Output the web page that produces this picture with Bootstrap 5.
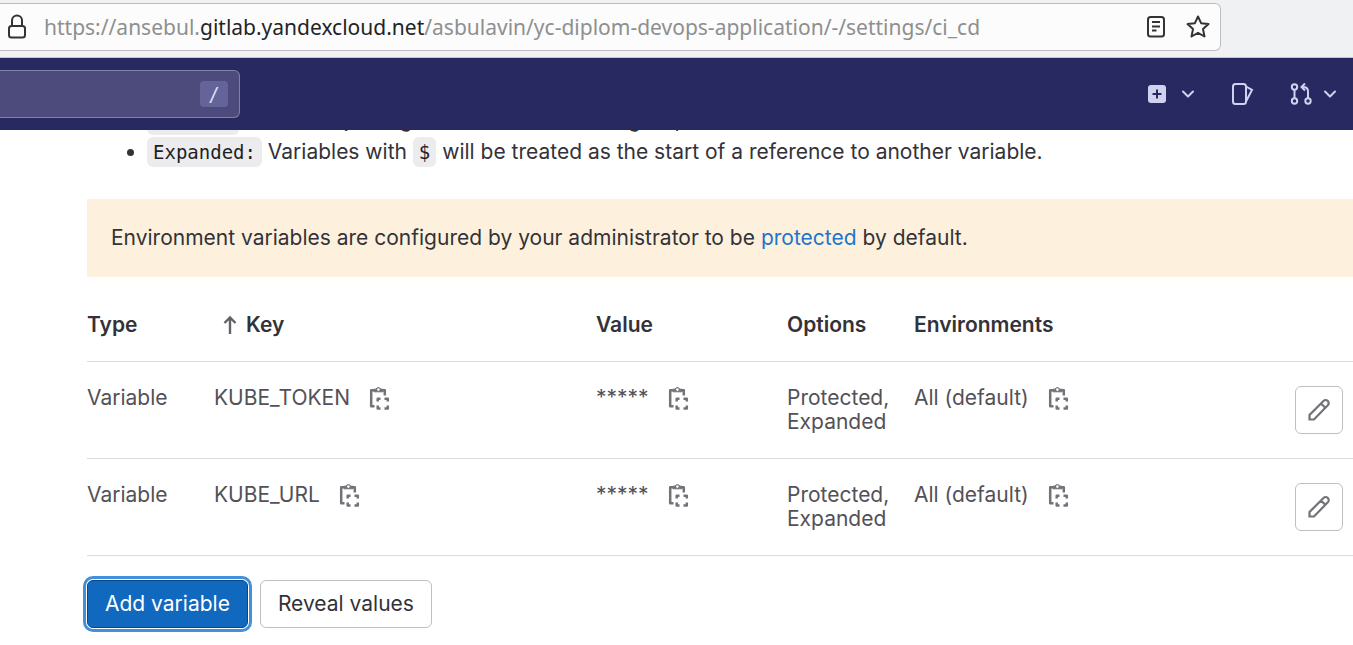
<!DOCTYPE html>
<html lang="en">
<head>
<meta charset="utf-8">
<meta name="viewport" content="width=device-width, initial-scale=1">
<title>CI/CD Settings</title>
<link href="https://cdn.jsdelivr.net/npm/bootstrap@5.3.0/dist/css/bootstrap.min.css" rel="stylesheet">
<style>
  body { font-family: Inter, "Liberation Sans", sans-serif; font-size: 21px; line-height: 32px; color: #333238; overflow-x: hidden; }
  svg { display: block; flex: none; fill: none; stroke: currentColor; stroke-width: 2; }
  .icon-btn { background: none; border: 0; padding: 0; color: inherit; }
  .browser-bar { background: #f0f1f3; border-bottom: 1px solid #c3c6c9; padding: 3px 132px 6px 0; }
  .address-box { height: 48px; background: #fcfcfc; border: 1px solid #bcbec0; border-left: 0; border-radius: 0 6px 6px 0; padding: 0 8px 0 5px; color: #333; }
  .address-text { font: 21px/32px "Noto Sans", sans-serif; color: #8e8f90; margin-left: 15px; }
  .address-text b { font-weight: 400; color: #222426; }
  .top-nav { background: #292961; height: 72px; color: #d1d1f0; z-index: 2; padding: 0 17px 0 0; }
  .nav-tools { gap: 36px; }
  .search-box { width: 240px; height: 48px; background: #4c4b7c; border: 1px solid #8080aa; border-left: 0; border-radius: 0 6px 6px 0; padding-right: 11px; }
  .search-box input { background: none; border: 0; outline: 0; color: #fff; min-width: 0; }
  .search-box kbd { flex: none; width: 28px; height: 26px; background: #65649a; border-radius: 4px; padding: 0; color: #dcdcf4; font: 19px/26px "DejaVu Sans Mono", monospace; text-align: center; }
  .settings { padding: 0 0 12px 87px; }
  .hints { margin: -26px 0 31px; padding-left: 60px; }
  .hints code { font: 19px/24px "DejaVu Sans Mono", monospace; color: #1f1e24; background: #ececef; border-radius: 6px; padding: 4px 6px; }
  .notice { background: #fdf1dd; padding: 24px; line-height: 30px; color: #333238; }
  .notice a { color: #1f75cb; text-decoration: none; }
  .vars { table-layout: fixed; width: 100%; line-height: 24px; color: #535158; margin-bottom: 24px; }
  .vars th { color: #333238; font-weight: 600; padding: 36px 0 24px; }
  .vars td { padding: 24px 0; vertical-align: top; }
  .vars tr { border-bottom: 1px solid #dcdcde; }
  .col-type, .col-opts { width: 127px; }
  .col-key { width: 382px; }
  .col-value { width: 191px; }
  .col-edit { width: 58px; }
  .vars .icon-btn { color: #737278; margin-left: 17px; }
  .gl-btn { height: 48px; padding: 0 17px; border: 1px solid #bfbfc3; border-radius: 6px; background: #fff; color: #333238; font-size: 21px; line-height: 30px; }
  .edit-btn { display: block; width: 48px; padding: 0 11px; color: #737278; }
  .add-btn { background: #1068bf; border-color: #064787; color: #fff; box-shadow: 0 0 0 1px #fff, 0 0 0 4px #428fdc; }
</style>
</head>
<body>
<svg width="0" height="0" class="position-absolute" aria-hidden="true">
  <symbol id="i-copy" viewBox="0 0 24 24">
    <g stroke-width="2.500" stroke-linejoin="round">
      <path d="M7.500 20.200H4.200V4.200H7M15 4.200H17.800V9.500"/>
      <path d="M7 5.800V3.200h2a2.600 2.600 0 0 1 4.800 0h2v2.600z" fill="currentColor" stroke-width="1"/>
      <circle cx="11.400" cy="3.600" r="1.300" fill="#fff" stroke="none"/>
      <path d="M10.700 15.500v-2.800h2.800M17.500 12.700h3.300v2.800M20.800 19.500v3h-3.300M13.500 22.500h-2.800v-3"/>
    </g>
  </symbol>
  <symbol id="i-pencil" viewBox="0 0 24 24">
    <path d="M2.500 21.500v-4.500L16.500 3a2.900 2.900 0 0 1 4.300 4.300L7 21.500zM14 5.500l4.500 4.500" stroke-width="2.200"/>
  </symbol>
  <symbol id="i-down" viewBox="0 0 12 8"><path d="M1 1.500l5 5 5-5" stroke-linecap="round" stroke-linejoin="round"/></symbol>
</svg>

<header class="browser-bar">
  <div class="address-box d-flex align-items-center">
    <svg width="24" height="28" viewBox="0 0 24 28"><rect x="4" y="13" width="16" height="11.500" rx="2.500"/><path d="M7 13V7.500a5 5 0 0 1 10 0V13"/></svg>
    <div class="address-text flex-grow-1 text-nowrap">https://ansebul.<b>gitlab.yandexcloud.net</b>/asbulavin/yc-diplom-devops-application/-/settings/ci_cd</div>
    <div class="d-flex gap-3 align-items-center">
      <button class="icon-btn" type="button" aria-label="Reader view"><svg width="24" height="24" viewBox="0 0 24 24"><rect x="4" y="2" width="16" height="19.500" rx="2.500"/><path d="M8 7h8M8 11.500h8M8 15.500h4.500"/></svg></button>
      <button class="icon-btn" type="button" aria-label="Bookmark"><svg width="28" height="28" viewBox="0 0 28 28"><path d="M14 3.500l3.100 6.700 7.400.9-5.500 5 1.500 7.400-6.500-3.700-6.500 3.700 1.500-7.400-5.500-5 7.400-.9z" stroke-linejoin="round"/></svg></button>
    </div>
  </div>
</header>

<nav class="top-nav position-relative d-flex align-items-center justify-content-between">
  <div class="search-box d-flex align-items-center">
    <input class="flex-grow-1" type="text" aria-label="Search GitLab"><kbd>/</kbd>
  </div>
  <div class="nav-tools d-flex align-items-center">
    <button class="icon-btn d-flex align-items-center gap-3" type="button" aria-label="Create new">
      <svg width="18" height="18" viewBox="0 0 18 18"><rect width="18" height="18" rx="3" fill="currentColor" stroke="none"/><path d="M9 4.500v9M4.500 9h9" stroke="#292961"/></svg>
      <svg width="12" height="8"><use href="#i-down"/></svg>
    </button>
    <a class="icon-btn" href="#" aria-label="Issues"><svg width="24" height="24" viewBox="-1 0 24 24"><rect x="2" y="2" width="13" height="20" rx="2.500"/><path d="M15 4.500l6 3.500-6 11.500"/></svg></a>
    <button class="icon-btn d-flex align-items-center" type="button" aria-label="Merge requests">
      <svg class="me-2" width="26" height="24" viewBox="0 0 26 24"><circle cx="4.500" cy="5" r="2.700"/><circle cx="4.500" cy="19" r="2.700"/><circle cx="18" cy="19" r="2.700"/><path d="M4.500 8v8M18 16V9.500q0-4.500-4.500-4.500H12M15 1.500L11.500 5 15 8.500"/></svg>
      <svg width="12" height="8"><use href="#i-down"/></svg>
    </button>
  </div>
</nav>

<main class="settings">
  <ul class="hints">
    <li><code>Masked:</code> Hidden in job logs. Must match masking requirements.</li>
    <li><code>Expanded:</code> Variables with <code>$</code> will be treated as the start of a reference to another variable.</li>
  </ul>
  <div class="notice">Environment variables are configured by your administrator to be <a href="#">protected</a> by default.</div>

  <table class="vars">
    <colgroup><col class="col-type"><col class="col-key"><col class="col-value"><col class="col-opts"><col><col class="col-edit"></colgroup>
    <thead>
      <tr><th scope="col">Type</th>
        <th scope="col"><div class="d-flex align-items-center gap-2 ps-2"><svg width="16" height="20" viewBox="0 0 16 20" color="#626168"><path d="M8 19V2.500M2.500 8L8 2.500 13.500 8" stroke-width="2.400"/></svg>Key</div></th>
        <th scope="col">Value</th><th scope="col">Options</th><th scope="col">Environments</th><th></th></tr>
    </thead>
    <tbody>
      <tr>
        <td>Variable</td>
        <td><div class="d-flex">KUBE_TOKEN<button class="icon-btn" type="button" aria-label="Copy key"><svg width="24" height="24"><use href="#i-copy"/></svg></button></div></td>
        <td><div class="d-flex">*****<button class="icon-btn" type="button" aria-label="Copy value"><svg width="24" height="24"><use href="#i-copy"/></svg></button></div></td>
        <td>Protected, Expanded</td>
        <td><div class="d-flex">All (default)<button class="icon-btn" type="button" aria-label="Copy environment"><svg width="24" height="24"><use href="#i-copy"/></svg></button></div></td>
        <td><button class="gl-btn edit-btn" type="button" aria-label="Edit"><svg width="24" height="24"><use href="#i-pencil"/></svg></button></td>
      </tr>
      <tr>
        <td>Variable</td>
        <td><div class="d-flex">KUBE_URL<button class="icon-btn" type="button" aria-label="Copy key"><svg width="24" height="24"><use href="#i-copy"/></svg></button></div></td>
        <td><div class="d-flex">*****<button class="icon-btn" type="button" aria-label="Copy value"><svg width="24" height="24"><use href="#i-copy"/></svg></button></div></td>
        <td>Protected, Expanded</td>
        <td><div class="d-flex">All (default)<button class="icon-btn" type="button" aria-label="Copy environment"><svg width="24" height="24"><use href="#i-copy"/></svg></button></div></td>
        <td><button class="gl-btn edit-btn" type="button" aria-label="Edit"><svg width="24" height="24"><use href="#i-pencil"/></svg></button></td>
      </tr>
    </tbody>
  </table>
  <div class="d-flex gap-2">
    <button class="gl-btn add-btn me-1" type="button">Add variable</button>
    <button class="gl-btn" type="button">Reveal values</button>
  </div>
</main>
<script src="https://cdn.jsdelivr.net/npm/bootstrap@5.3.0/dist/js/bootstrap.bundle.min.js"></script>
</body>
</html>
